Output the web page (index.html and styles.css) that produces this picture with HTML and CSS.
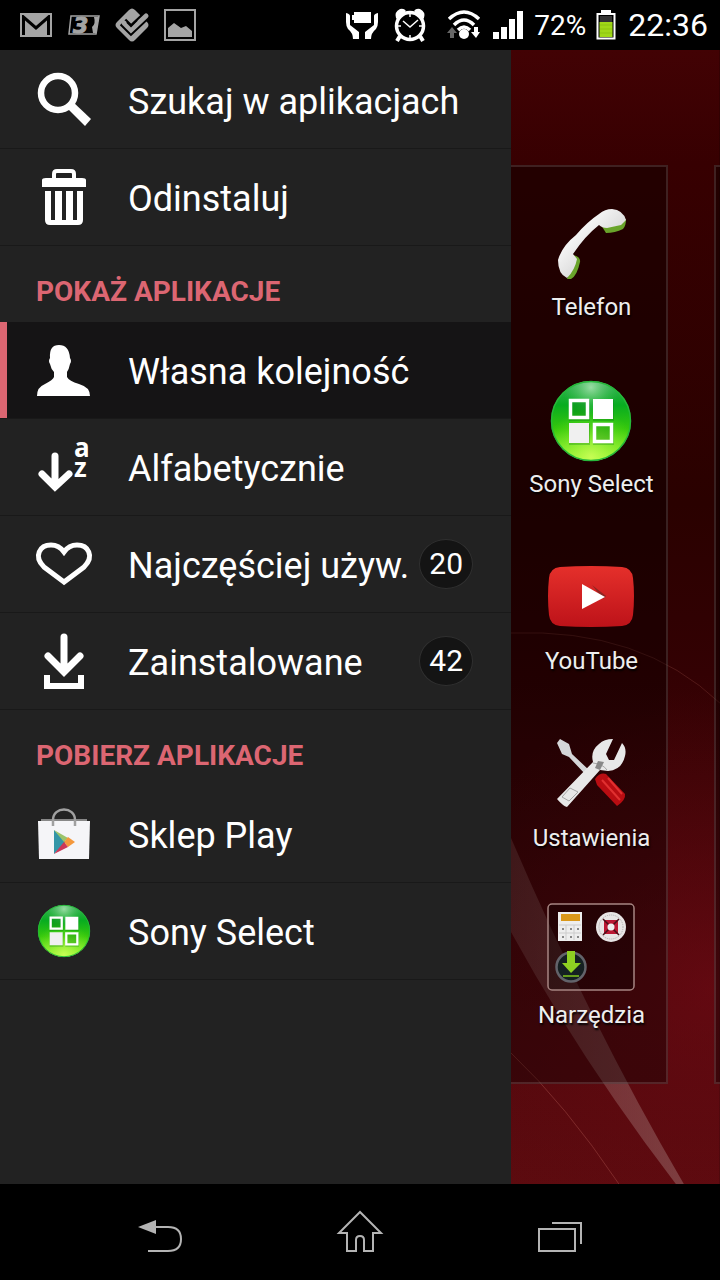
FILE: index.html
```html
<!DOCTYPE html>
<html lang="pl">
<head>
<meta charset="utf-8">
<meta name="viewport" content="width=device-width, initial-scale=1.0">
<title>Aplikacje</title>
<link rel="stylesheet" href="styles.css">
</head>
<body>

<!-- shared icon -->
<svg class="defs" width="0" height="0" aria-hidden="true">
    <defs>
        <linearGradient id="green_fill" x1="0" y1="0" x2="0" y2="1">
            <stop offset="0" stop-color="#3cb35c"/>
            <stop offset=".3" stop-color="#08ac20"/>
            <stop offset=".6" stop-color="#35c80c"/>
            <stop offset="1" stop-color="#a4fa38"/>
        </linearGradient>
        <radialGradient id="green_glow" cx=".5" cy=".95" r=".6">
            <stop offset="0" stop-color="#d2ff5c" stop-opacity=".8"/>
            <stop offset="1" stop-color="#80f020" stop-opacity="0"/>
        </radialGradient>
        <radialGradient id="green_shine" cx=".5" cy=".08" r=".35">
            <stop offset="0" stop-color="#c4efc8" stop-opacity=".7"/>
            <stop offset="1" stop-color="#50c060" stop-opacity="0"/>
        </radialGradient>
    </defs>
    <symbol id="sony_select" viewBox="0 0 82 82">
        <circle cx="41" cy="41" r="40" fill="url(#green_fill)"/>
        <circle cx="41" cy="41" r="40" fill="url(#green_glow)"/>
        <circle cx="41" cy="41" r="40" fill="url(#green_shine)"/>
        <circle cx="41" cy="41" r="39.5" fill="none" stroke="#26b83a" stroke-width="1.5"/>
        <path d="M19 20h21v21h-21zM43 20h21v21h-21zM19 44h21v21h-21zM43 44h21v21h-21z" fill="#087a10" opacity=".3"/>
        <path d="M20.5 20.500h17v17h-17zM44.500 44.500h17v17h-17z" fill="none" stroke="#fff" stroke-width="3.500"/>
        <path d="M43 19h20v20h-20z" fill="#fff"/>
        <path d="M19 43h20v20h-20z" fill="#f0f0f0"/>
    </symbol>
</svg>

<header class="status_bar">
    <div class="notifications">
        <svg width="34" height="26" viewBox="0 0 34 26">
            <path d="M1 1h32v24H1z" fill="#a4a4a4"/>
            <path d="M4.500 23V5L17 16 29.500 5v18" fill="none" stroke="#000" stroke-width="3"/>
            <path d="M1 2h32" stroke="#a4a4a4" stroke-width="2"/>
        </svg>
        <svg width="34" height="22" viewBox="0 0 34 22">
            <path d="M4 2h28l-3 18H2z" fill="#000" stroke="#a4a4a4" stroke-width="1.500"/>
            <path d="M27 3h5l-3 16h-3l-1-6q4-3 2-10z" fill="#a4a4a4"/>
            <text x="6" y="19" class="logo_three">3</text>
        </svg>
        <svg width="34" height="34" viewBox="0 0 34 34">
            <path d="M14 2Q17-1 20 2L32 14Q35 17 32 20L20 32Q17 35 14 32L2 20Q-1 17 2 14z" fill="#a4a4a4"/>
            <path d="M8 14l8 8L34 5" fill="none" stroke="#000" stroke-width="9"/>
            <path d="M9 15l7 7L31 8" fill="none" stroke="#a4a4a4" stroke-width="5" stroke-linecap="round"/>
            <path d="M12 14l4 4 6-6" fill="none" stroke="#000" stroke-width="2"/>
        </svg>
        <svg width="34" height="34" viewBox="0 0 34 34">
            <path d="M2 2h30v30H2z" fill="none" stroke="#a4a4a4" stroke-width="2"/>
            <path d="M5 29v-9l6-5 7 5 5-2 6 5v6z" fill="#a4a4a4"/>
        </svg>
    </div>
    <div class="system">
        <svg class="stamina" width="34" height="28" viewBox="0 0 34 28">
            <path d="M9 1h17v11H9v-3H7V4h2z" fill="#fff"/>
            <path d="M1 2q4 1 4 3v9l9 7v7H8q0-6-5-10-2-3-2-7zM33 2q-4 1-4 3v9l-9 7v7h6q0-6 5-10 2-3 2-7z" fill="#fff"/>
        </svg>
        <svg class="alarm" width="32" height="34" viewBox="0 0 32 34">
            <circle cx="16" cy="18" r="13.500" fill="none" stroke="#fff" stroke-width="3.500"/>
            <path d="M2 10q-2-6 4-9 4-1 6 2L3 11zM30 10q2-6-4-9-4-1-6 2l9 8z" fill="#fff"/>
            <path d="M6 28l-3 5M26 28l3 5" stroke="#fff" stroke-width="4"/>
            <path d="M9 13l7 6 8-7M16 6v3M16 27v3M4 18h3M25 18h3" fill="none" stroke="#fff" stroke-width="1.500"/>
        </svg>
        <svg class="wifi" width="32" height="30" viewBox="0 0 32 30">
            <path d="M1 9q15-14 30 0M6 15q10-10 20 0M10 20q6-6 12 0" fill="none" stroke="#fff" stroke-width="3.500"/>
            <circle cx="16" cy="24" r="5" fill="#fff"/>
            <path d="M4 17l5 6H6v5H2v-5h-3z" fill="#666"/>
            <path d="M28 28l4-6h-2v-5h-4v5h-3z" fill="#fff"/>
        </svg>
        <svg class="signal" width="31" height="28" viewBox="0 0 31 28">
            <path d="M0 21h6v7H0zM8 16h6v12H8zM16 8h6v20h-6zM24 0h6v28h-6z" fill="#fff"/>
        </svg>
        <span class="percent">72%</span>
        <svg class="battery" width="20" height="30" viewBox="0 0 20 30">
            <path d="M6 3V1h8v2M1.500 4h17v24.500h-17z" fill="none" stroke="#fff" stroke-width="2"/>
            <path d="M6 0h8v3H6z" fill="#fff"/>
            <path d="M4 6h12v6H4z" fill="#333"/>
            <path d="M3.500 12h13v15h-13z" fill="#a0d818"/>
            <path d="M4 15h12M4 19h12M4 23h12" stroke="#8cc410"/>
        </svg>
        <span class="clock">22:36</span>
    </div>
</header>

<main class="screen">
    <nav class="drawer">
        <button class="row">
            <svg class="icon" viewBox="0 0 56 56">
                <circle cx="22" cy="21" r="17" fill="none" stroke="#fff" stroke-width="6.500"/>
                <path d="M32 32l4-3 19 18-6 7-18-18z" fill="#fff"/>
            </svg>
            <span class="label">Szukaj w aplikacjach</span>
        </button>
        <button class="row">
            <svg class="icon" viewBox="0 0 56 56">
                <path d="M18 9V5q0-3 3-3h14q3 0 3 3v4" fill="none" stroke="#fff" stroke-width="4"/>
                <path d="M6 11q0-2 4-2h36q4 0 4 2v7H6zM9 22h38v29q0 5-5 5H14q-5 0-5-5z" fill="#fff"/>
                <path d="M17 22v29M28 22v29M39 22v29" stroke="#222" stroke-width="4"/>
            </svg>
            <span class="label">Odinstaluj</span>
        </button>

        <h2>POKAŻ APLIKACJE</h2>
        <button class="row selected">
            <svg class="icon" viewBox="0 0 56 56">
                <path d="M1 54q0-9 8-12 8-4 9-7v-5q-3-3-4-8-2-3 0-6Q13 3 23 3t11 13q2 3 0 6-1 5-3 8v5q2 4 12 7 11 3 11 12z" fill="#fff"/>
            </svg>
            <span class="label">Własna kolejność</span>
        </button>
        <button class="row">
            <svg class="icon" viewBox="0 0 56 56">
                <path d="M19 17v29M6 35l13 13 14-13" fill="none" stroke="#fff" stroke-width="7" stroke-linecap="round"/>
                <text x="38" y="18" class="sort_letter">a</text>
                <text x="38" y="38" class="sort_letter">z</text>
            </svg>
            <span class="label">Alfabetycznie</span>
        </button>
        <button class="row">
            <svg class="icon" viewBox="0 0 56 56">
                <path d="M28 46L8 31C-3 20 4 9 15 9q8 0 13 7 5-7 13-7c11 0 18 11 7 22z" fill="none" stroke="#fff" stroke-width="5"/>
            </svg>
            <span class="label">Najczęściej używ.</span>
            <span class="badge">20</span>
        </button>
        <button class="row">
            <svg class="icon" viewBox="0 0 56 56">
                <path d="M28 4v34M12 23l16 16 16-16" fill="none" stroke="#fff" stroke-width="7" stroke-linecap="round"/>
                <path d="M11 42v11h34V42" fill="none" stroke="#fff" stroke-width="6"/>
            </svg>
            <span class="label">Zainstalowane</span>
            <span class="badge">42</span>
        </button>

        <h2>POBIERZ APLIKACJE</h2>
        <button class="row">
            <svg class="icon" viewBox="0 0 56 56">
                <path d="M5 13h46v4H5z" fill="#888"/>
                <path d="M2 15h52l-1 38H3z" fill="#f5f5f8"/>
                <path d="M17 20v-6C17 0 39 0 39 14v6" fill="none" stroke="#a0a0a0" stroke-width="2.500"/>
                <path d="M18 24v24l12-12z" fill="#3496a8"/>
                <path d="M18 24l14 8-4 4z" fill="#9cc46a"/>
                <path d="M32 31l7 5-7 5-4-5z" fill="#f4983c"/>
                <path d="M18 48l14-7-4-5z" fill="#cc3858"/>
            </svg>
            <span class="label">Sklep Play</span>
        </button>
        <button class="row">
            <svg class="icon" viewBox="-2 -2 86 86"><use href="#sony_select" width="82" height="82"/></svg>
            <span class="label">Sony Select</span>
        </button>
    </nav>

    <section class="desktop">
        <svg class="wallpaper" viewBox="0 0 209 1134" preserveAspectRatio="none" aria-hidden="true">
            <defs>
                <linearGradient id="base" x1="0" y1="0" x2="0" y2="1">
                    <stop offset="0" stop-color="#420204"/>
                    <stop offset=".1" stop-color="#370001"/>
                    <stop offset=".4" stop-color="#2a0100"/>
                    <stop offset=".55" stop-color="#330103"/>
                    <stop offset=".8" stop-color="#4c070b"/>
                    <stop offset="1" stop-color="#5c0b0f"/>
                </linearGradient>
                <radialGradient id="glow" gradientUnits="userSpaceOnUse" cx="200" cy="940" r="300">
                    <stop offset="0" stop-color="#700a14" stop-opacity=".6"/>
                    <stop offset="1" stop-color="#600810" stop-opacity="0"/>
                </radialGradient>
                <linearGradient id="ray" x1="0" y1="0" x2="1" y2="0">
                    <stop offset="0" stop-color="#a07070" stop-opacity=".3"/>
                    <stop offset="1" stop-color="#9c7070" stop-opacity=".5"/>
                </linearGradient>
            </defs>
            <path d="M0 0h209v1134H0z" fill="url(#base)"/>
            <path d="M0 583q130-5 209 70v481H0z" fill="url(#glow)"/>
            <path d="M0 583q130-5 209 70" fill="none" stroke="#70302c" stroke-opacity=".5"/>
            <path d="M0 788Q80 975 173 1134h-8Q70 1010 0 882z" fill="url(#ray)"/>
            <path d="M0 1003q55 52 108 131" fill="none" stroke="#96403c" stroke-opacity=".6"/>
        </svg>

        <div class="page">
            <a class="app" href="#">
                <svg width="88" height="88" viewBox="0 0 88 88">
                    <defs>
                        <linearGradient id="handset" x1="0" y1="0" x2="1" y2="1">
                            <stop offset=".2" stop-color="#fff"/>
                            <stop offset="1" stop-color="#b8b8b8"/>
                        </linearGradient>
                    </defs>
                    <path d="M54 25l25-6q0 7-3 10-8 4-17 4zM20 79q6-17 6-24 8 2 7 7-3 14-9 17z" fill="#69a42a"/>
                    <path d="M11 60q4-14 18-25 11-13 23-21 6-5 13-5 11 1 14 11l-5 5-14 3q-5 0-8-3-14 11-26 29l4 5q-2 11-10 19-9-4-9-18z" fill="url(#handset)"/>
                </svg>
                <span>Telefon</span>
            </a>
            <a class="app" href="#">
                <svg width="88" height="88" viewBox="-3 -3 88 88"><use href="#sony_select" width="82" height="82"/></svg>
                <span>Sony Select</span>
            </a>
            <a class="app" href="#">
                <svg width="88" height="88" viewBox="0 2 88 88">
                    <defs>
                        <linearGradient id="yt" x1="0" y1="0" x2="0" y2="1">
                            <stop offset="0" stop-color="#e5302b"/>
                            <stop offset="1" stop-color="#bd1219"/>
                        </linearGradient>
                    </defs>
                    <path d="M13 15q31-2 62 0 10 1 11 11 2 18 0 37-1 10-11 11-31 2-62 0-10-1-11-11-2-19 0-37 1-10 11-11z" fill="url(#yt)"/>
                    <path d="M45 33l14 11-3 3z" fill="#8d2522"/>
                    <path d="M35 32v25l23-12z" fill="#fff"/>
                </svg>
                <span>YouTube</span>
            </a>
            <a class="app" href="#">
                <svg width="88" height="88" viewBox="0 2 88 88">
                    <path d="M10 14l3-4 9 5 3 10 18 17-4 4-17-18-7-3z" fill="#d4d6d8"/>
                    <path d="M48 50q5-7 11-5l19 20q1 6-8 12L50 56z" fill="#b90d12"/>
                    <path d="M55 51l18 20M61 49l14 16" stroke="#e03030" stroke-width="2"/>
                    <path d="M10 70l36-37q-3-11 6-18 5-5 14-5l-7 15 3 6h5l8-17q5 5 3 13-3 14-17 15l-8-1L20 78q-4-1-10-8z" fill="#e8e8e8"/>
                    <path d="M15 68l8-9 8 4-9 9zM46 34q10 1 14 7" fill="none" stroke="#a5a5a5"/>
                    <path d="M51 32l6 1-4 8-5-2z" fill="#888"/>
                </svg>
                <span>Ustawienia</span>
            </a>
            <a class="app" href="#">
                <svg width="88" height="88" viewBox="0 5 88 88">
                    <rect x="1" y="1" width="86" height="86" rx="4" fill="#000" fill-opacity=".3" stroke="#a78582" stroke-width="1.500"/>
                    <path d="M11 9h24v29H11z" fill="#eee"/>
                    <path d="M14 11h19v7H14z" fill="#da981a"/>
                    <path d="M12 22h22M12 30h22M19 22v15M27 22v15" stroke="#ccc"/>
                    <path d="M15 26h2M23 26h2M30 26h2M15 34h2M23 34h2M30 34h2" stroke="#888" stroke-width="2"/>
                    <circle cx="64" cy="24" r="15" fill="#e8e5e5"/>
                    <circle cx="64" cy="24" r="12" fill="none" stroke="#aaa" stroke-dasharray="1 1"/>
                    <path d="M57 17h14v14H57z" fill="#ba1733"/>
                    <path d="M56 16l16 16M72 16L56 32" stroke="#481018" stroke-width="1.500"/>
                    <circle cx="64" cy="24" r="3.500" fill="#eee"/>
                    <circle cx="24" cy="64" r="14.500" fill="#152022" stroke="#62636a" stroke-width="2.500"/>
                    <path d="M20 48h8v12h6L24 70 15 60h5z" fill="#8ed022"/>
                    <path d="M16 73h16" stroke="#669b1c" stroke-width="2"/>
                </svg>
                <span>Narzędzia</span>
            </a>
        </div>
        <div class="page next_page"></div>
    </section>
</main>

<footer class="nav_bar">
    <button aria-label="Wstecz">
        <svg width="48" height="48" viewBox="0 0 48 48">
            <path d="M2 19l18-7v14z" fill="#b4b4b4"/>
            <path d="M18 19h14q13 0 13 12t-13 12H12" fill="none" stroke="#b4b4b4" stroke-width="2"/>
        </svg>
    </button>
    <button aria-label="Ekran główny">
        <svg width="48" height="48" viewBox="0 0 48 48">
            <path d="M24 4L3 25h8v18h9V32q0-4 4-4t4 4v11h9V25h8z" fill="none" stroke="#b4b4b4" stroke-width="2"/>
        </svg>
    </button>
    <button aria-label="Ostatnie aplikacje">
        <svg width="48" height="48" viewBox="0 0 48 48">
            <path d="M3 21h36v22H3zM16 15h29v21" fill="none" stroke="#b4b4b4" stroke-width="2"/>
        </svg>
    </button>
</footer>

</body>
</html>
```
FILE: styles.css
```css
*, *:after, *:before {
    box-sizing: border-box;
}

body {
    margin: 0;
    min-height: 100vh;
    display: flex;
    flex-direction: column;
    background: #000;
    color: #fff;
    font-family: Roboto, "Noto Sans", sans-serif;
}

button {
    margin: 0;
    padding: 0;
    border: 0;
    background: none;
    color: inherit;
    font-family: inherit;
    cursor: pointer;
}

svg {
    display: block;
    flex: none;
    overflow: visible;
}

.defs {
    position: absolute;
}

/* status bar */
.status_bar {
    height: 50px;
    padding: 0 12px 0 19px;
    display: flex;
    align-items: center;
    justify-content: space-between;
}

.notifications, .system {
    display: flex;
    align-items: center;
}

.notifications {
    gap: 14px;
}

.logo_three {
    font: italic bold 22px "DejaVu Sans", sans-serif;
    fill: #a4a4a4;
    stroke: #a4a4a4;
}

.stamina {
    margin-right: 15px;
}

.alarm {
    margin-right: 22px;
}

.wifi {
    margin-right: 13px;
}

.signal {
    margin-right: 10px;
}

.percent {
    margin-right: 10px;
    font-size: 28px;
}

.battery {
    margin-right: 12px;
}

.clock {
    font-size: 32px;
}

/* main area */
.screen {
    flex: 1;
    display: flex;
}

.drawer {
    width: 71%;
    padding-top: 2px;
    background: #222;
}

.row {
    width: 100%;
    height: 97px;
    padding: 0 38px 0 36px;
    display: flex;
    align-items: center;
    border-bottom: 1px solid #191919;
    text-align: left;
}

.row .icon {
    width: 56px;
    height: 56px;
    margin-right: 36px;
}

.row .label {
    flex: 1;
    padding-top: 4px;
    font-size: 36px;
    line-height: 44px;
    white-space: nowrap;
}

.selected {
    background: #151415;
    box-shadow: inset 7px 0 #dc6672;
}

.sort_letter {
    font: bold 26px "Open Sans", sans-serif;
    fill: #fff;
}

.badge {
    width: 54px;
    height: 50px;
    border: 1px solid #303030;
    border-radius: 50%;
    background: #141414;
    font-size: 30px;
    line-height: 48px;
    text-align: center;
}

.drawer h2 {
    height: 76px;
    margin: 0;
    padding: 15px 36px 0;
    color: #dc6672;
    font-size: 28px;
    font-weight: bold;
    line-height: 62px;
}

.desktop {
    flex: 1;
    position: relative;
    display: flex;
    gap: 46px;
    padding: 115px 0 100px;
    overflow: hidden;
}

.wallpaper {
    position: absolute;
    top: 0;
    left: 0;
    width: 100%;
    height: 100%;
}

.page {
    position: relative;
    flex: none;
    width: 75%;
    padding: 33px 0 0 6px;
    display: flex;
    flex-direction: column;
    align-items: center;
    gap: 55px;
    background: rgba(0, 0, 0, .35);
    border: 2px solid rgba(255, 255, 255, .13);
    border-left: 0;
}

.next_page {
    border-left: 2px solid rgba(255, 255, 255, .13);
}

.app {
    display: flex;
    flex-direction: column;
    align-items: center;
    gap: 4px;
    color: #eee;
    font-size: 24px;
    line-height: 30px;
    text-decoration: none;
    text-shadow: 1px 2px 2px #000;
    white-space: nowrap;
}

/* bottom keys */
.nav_bar {
    height: 96px;
    padding: 0 62px;
    display: flex;
    justify-content: space-between;
}

.nav_bar button {
    width: 196px;
    display: flex;
    align-items: center;
    justify-content: center;
}
```
